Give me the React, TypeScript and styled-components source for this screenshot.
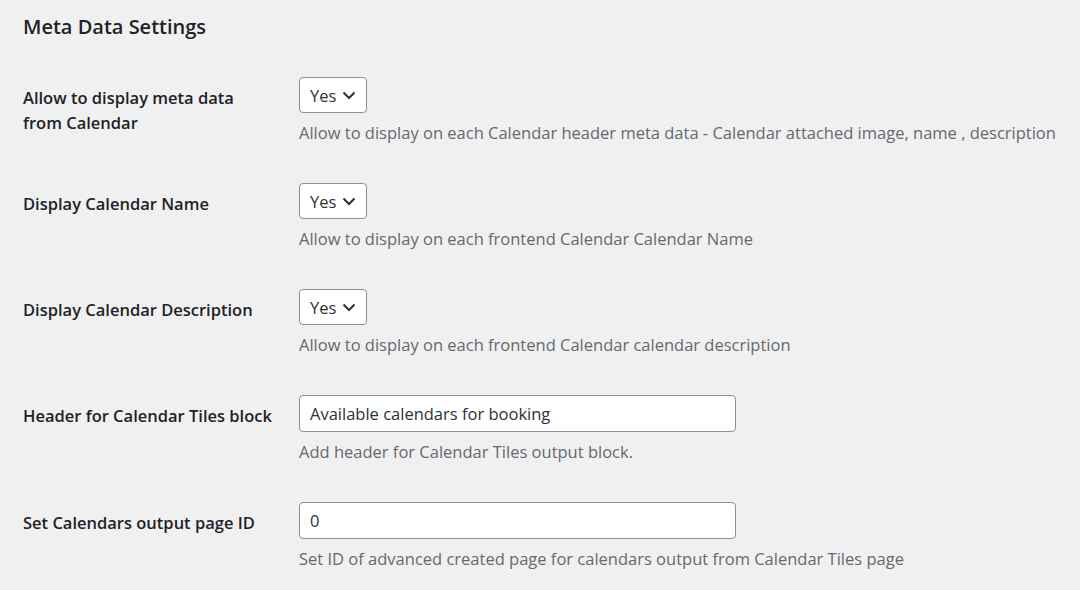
import React from "react";
import styled, { createGlobalStyle } from "styled-components";

const Global = createGlobalStyle`
  html, body { margin: 0; padding: 0; background: #f0f0f1; }
  body { font-family: "Open Sans", "Noto Sans", sans-serif; color: #1d2327; }
`;

const Wrap = styled.div`
  padding: 0 23px;
  width: 1080px;
  box-sizing: border-box;
`;

const Heading = styled.h2`
  margin: 0;
  padding-top: 14px;
  height: 58px;
  box-sizing: border-box;
  font-size: 20px;
  font-weight: 600;
  line-height: 26px;
  color: #1d2327;
`;

const Row = styled.div`
  display: grid;
  grid-template-columns: 276px 1fr;
  padding: 19px 0;
`;

const Label = styled.div`
  padding-top: 8px;
  padding-right: 12px;
  font-size: 16.5px;
  font-weight: 600;
  line-height: 25px;
  color: #1d2327;
`;

const Field = styled.div`
  display: flex;
  flex-direction: column;
  align-items: flex-start;
`;

const SelectBox = styled.div`
  display: flex;
  align-items: center;
  gap: 6px;
  height: 36px;
  box-sizing: border-box;
  padding: 0 10px 0 10px;
  border: 1px solid #8c8f94;
  border-radius: 4px;
  background: #fff;
  font-size: 16.5px;
  color: #2c3338;
`;

const TextInput = styled.div`
  display: flex;
  align-items: center;
  width: 437px;
  height: 37px;
  box-sizing: border-box;
  padding: 0 10px;
  border: 1px solid #8c8f94;
  border-radius: 4px;
  background: #fff;
  font-size: 16.5px;
  color: #2c3338;
`;

const Desc = styled.p`
  margin: 7px 0 0;
  font-size: 16.5px;
  line-height: 25px;
  color: #646970;
  white-space: nowrap;
`;

const Chevron = () => (
  <svg width="14" height="9" viewBox="0 0 14 9" fill="none">
    <path d="M1.5 1.5 L7 7 L12.5 1.5" stroke="#2c3338" strokeWidth="2" />
  </svg>
);

const rows = [
  {
    label: (
      <>
        Allow to display meta data
        <br />
        from Calendar
      </>
    ),
    kind: "select",
    value: "Yes",
    desc: "Allow to display on each Calendar header meta data - Calendar attached image, name , description",
  },
  {
    label: "Display Calendar Name",
    kind: "select",
    value: "Yes",
    desc: "Allow to display on each frontend Calendar Calendar Name",
  },
  {
    label: "Display Calendar Description",
    kind: "select",
    value: "Yes",
    desc: "Allow to display on each frontend Calendar calendar description",
  },
  {
    label: "Header for Calendar Tiles block",
    kind: "text",
    value: "Available calendars for booking",
    desc: "Add header for Calendar Tiles output block.",
  },
  {
    label: "Set Calendars output page ID",
    kind: "text",
    value: "0",
    desc: "Set ID of advanced created page for calendars output from Calendar Tiles page",
  },
];

export default function App() {
  return (
    <>
      <Global />
      <Wrap>
        <Heading>Meta Data Settings</Heading>
        {rows.map((r, i) => (
          <Row key={i}>
            <Label>{r.label}</Label>
            <Field>
              {r.kind === "select" ? (
                <SelectBox>
                  {r.value}
                  <Chevron />
                </SelectBox>
              ) : (
                <TextInput>{r.value}</TextInput>
              )}
              <Desc>{r.desc}</Desc>
            </Field>
          </Row>
        ))}
      </Wrap>
    </>
  );
}
